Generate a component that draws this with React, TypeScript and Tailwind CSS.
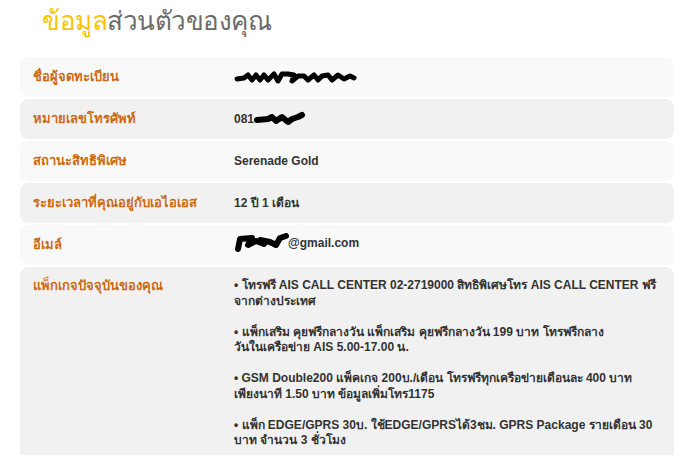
import React from "react";

function Scribble({ w, h, d, sw = 4 }: { w: number; h: number; d: string; sw?: number }) {
  return (
    <svg width={w} height={h} viewBox={`0 0 ${w} ${h}`} className="inline-block align-middle">
      <path d={d} fill="none" stroke="#000" strokeWidth={sw} strokeLinecap="round" strokeLinejoin="round" />
    </svg>
  );
}

const rows: { label: string; value: React.ReactNode }[] = [
  {
    label: "ชื่อผู้จดทะเบียน",
    value: (
      <Scribble
        w={124}
        h={16}
        sw={5}
        d="M3 9 L10 8 L14 5 L18 10 L22 5 L26 10 L30 5 L34 10 L40 4 L44 11 L48 4 L54 4 L60 5 L58 11 L64 6 L70 6 L74 10 L80 5 L84 10 L88 6 L94 5 L98 10 L104 5 L110 9 L116 6 L120 8"
      />
    ),
  },
  {
    label: "หมายเลขโทรศัพท์",
    value: (
      <span className="inline-flex items-center">
        081
        <Scribble w={52} h={16} sw={6} d="M3 9 L14 8 L18 6 L22 10 L28 6 L34 11 L38 8 L44 6 L48 4" />
      </span>
    ),
  },
  { label: "สถานะสิทธิพิเศษ", value: "Serenade Gold" },
  { label: "ระยะเวลาที่คุณอยู่กับเอไอเอส", value: "12 ปี 1 เดือน" },
  {
    label: "อีเมล์",
    value: (
      <span className="inline-flex items-center">
        <Scribble w={58} h={20} sw={6} d="M4 16 L6 6 L18 5 L14 12 L22 8 L30 11 L26 7 L36 9 L42 12 L46 5 L52 3" />
        <span className="-ml-1">@gmail.com</span>
      </span>
    ),
  },
];

const packages: React.ReactNode[] = [
  "• โทรฟรี AIS CALL CENTER 02-2719000 สิทธิพิเศษโทร AIS CALL CENTER ฟรีจากต่างประเทศ",
  <>
    • แพ็กเสริม คุยฟรีกลางวัน แพ็กเสริม คุยฟรีกลางวัน 199 บาท โทรฟรีกลาง
    <br />
    วันในเครือข่าย AIS 5.00-17.00 น.
  </>,
  "• GSM Double200 แพ็คเกจ 200บ./เดือน โทรฟรีทุกเครือข่ายเดือนละ 400 บาท เพียงนาที 1.50 บาท ข้อมูลเพิ่มโทร1175",
  "• แพ็ก EDGE/GPRS 30บ. ใช้EDGE/GPRSได้3ชม. GPRS Package รายเดือน 30 บาท จำนวน 3 ชั่วโมง",
];

export default function App() {
  const font = { fontFamily: '"Liberation Sans", "Noto Sans", Arial, sans-serif' };
  return (
    <div className="w-[675px] h-[455px] overflow-hidden bg-white" style={font}>
      <h1 className="pl-[42px] pt-[6px] h-[57px] text-[26px] leading-[30px] tracking-[-0.5px] font-normal">
        <span className="text-[#f6c500]">ข้อมูล</span>
        <span className="text-[#6b6b6b]">ส่วนตัวของคุณ</span>
      </h1>
      <div className="ml-[20px] w-[654px] flex flex-col gap-[2px]">
        {rows.map((r, i) => (
          <div
            key={i}
            className={`flex items-center h-[40px] rounded-[8px] ${i % 2 === 0 ? "bg-[#f9f9f9]" : "bg-[#f1f1f1]"}`}
          >
            <div className="w-[214px] pl-[13px] text-[13px] font-bold text-[#cc6a12]">{r.label}</div>
            <div className="text-[12px] font-bold text-[#333333]">{r.value}</div>
          </div>
        ))}
        <div className="flex rounded-t-[8px] bg-[#f1f1f1] h-[200px] pt-[11px]">
          <div className="w-[214px] pl-[13px] text-[13px] font-bold text-[#cc6a12] leading-[16px]">
            แพ็กเกจปัจจุบันของคุณ
          </div>
          <div className="w-[424px] text-[12px] font-bold text-[#333333] leading-[15.5px] flex flex-col gap-[15.5px]">
            {packages.map((p, i) => (
              <p key={i}>{p}</p>
            ))}
          </div>
        </div>
      </div>
    </div>
  );
}
